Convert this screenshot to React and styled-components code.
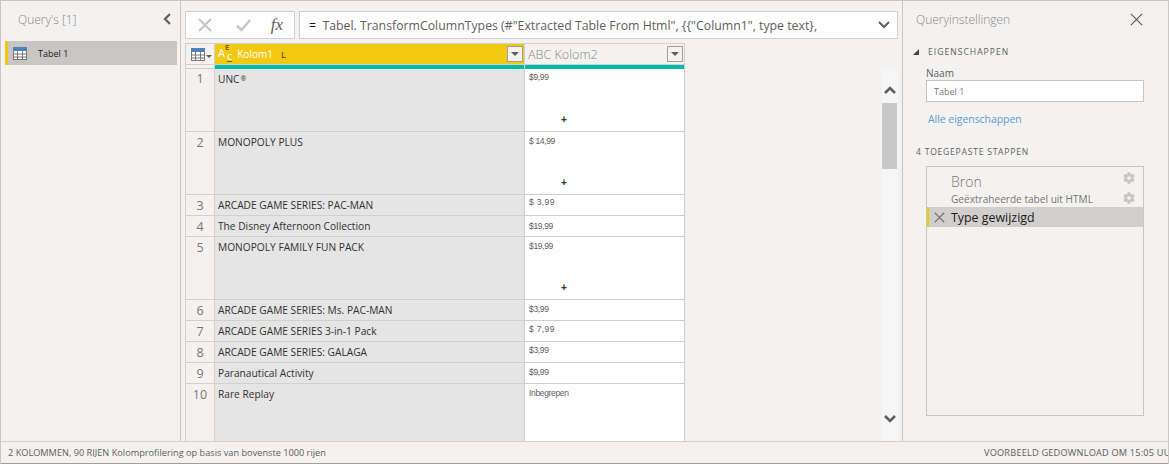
import styled, { createGlobalStyle } from 'styled-components';
import { FaCog } from 'react-icons/fa';

const GlobalStyle = createGlobalStyle`
  html, body {
    margin: 0;
    padding: 0;
    height: 100%;
    overflow: hidden;
    background: #f3f2f1;
  }
  * { box-sizing: border-box; }
`;

const Page = styled.div`
  width: 1169px;
  height: 464px;
  display: grid;
  grid-template-columns: 180px 722px 1fr;
  grid-template-rows: 440px 23px;
  border-top: 1px solid #c8c6c4;
  border-left: 1px solid #c8c6c4;
  border-right: 1px solid #c8c6c4;
  font-family: 'Open Sans', 'Liberation Sans', sans-serif;
  color: #3b3a39;
  overflow: hidden;
`;

const LeftPane = styled.aside`
  border-right: 1px solid #c8c6c4;
  padding: 0 3px 0 4px;
`;

const PaneHeader = styled.div`
  height: 40px;
  padding: 0 6px 4px 13px;
  display: flex;
  align-items: center;
  justify-content: space-between;
  font-size: 12px;
  font-weight: 300;
  color: #8a8886;
`;

const QueryItem = styled.div`
  height: 24px;
  display: flex;
  align-items: center;
  gap: 11px;
  padding-left: 5px;
  background: #c8c6c4;
  border-left: 3px solid #f2c811;
  font-size: 9px;
  color: #1b1a19;
`;

const Main = styled.main`
  padding: 10px 4px 0 4px;
  display: flex;
  flex-direction: column;
  border-right: 1px solid #c8c6c4;
  min-height: 0;
`;

const FormulaRow = styled.div`
  display: flex;
  gap: 4px;
  height: 28px;
  flex: none;
  margin-bottom: 4px;
`;

const FormulaButtons = styled.div`
  width: 110px;
  display: flex;
  align-items: center;
  justify-content: space-between;
  padding: 0 11px 0 12px;
  background: #fff;
  border: 1px solid #d2d0ce;
`;

const CheckSlot = styled.span`
  display: flex;
  margin-left: 5px;
`;

const FxLabel = styled.span`
  font-family: 'Liberation Serif', serif;
  font-style: italic;
  font-size: 17px;
  color: #605e5c;
`;

const FormulaInput = styled.div`
  flex: 1;
  display: flex;
  align-items: center;
  justify-content: space-between;
  padding: 0 7px 0 9px;
  background: #fff;
  border: 1px solid #d2d0ce;
  font-size: 12.3px;
  color: #605e5c;
  white-space: pre;
`;

const Equals = styled.span`
  color: #1b1a19;
`;

const Workspace = styled.div`
  flex: 1;
  display: flex;
  justify-content: space-between;
  min-height: 0;
`;

const Grid = styled.div`
  width: 500px;
  display: flex;
  flex-direction: column;
  border-left: 1px solid #d2d0ce;
  overflow: hidden;
`;

const HeaderRow = styled.div`
  display: flex;
  height: 22px;
  flex: none;
  border-top: 1px solid #d2d0ce;
  border-bottom: 1px solid #d2d0ce;
`;

const Corner = styled.div`
  width: 29px;
  flex: none;
  display: flex;
  align-items: center;
  padding-left: 5px;
  gap: 1px;
  border-right: 1px solid #d2d0ce;
  background: #f3f2f1;
`;

const ColumnHead = styled.div`
  width: ${p => p.$width}px;
  flex: none;
  display: flex;
  align-items: center;
  justify-content: space-between;
  padding: 0 1px 0 3px;
  background: ${p => (p.$active ? '#f2c811' : '#f3f2f1')};
  color: ${p => (p.$active ? '#fff' : '#8a8886')};
  font-size: ${p => (p.$active ? 10 : 12.6)}px;
  font-weight: ${p => (p.$active ? 400 : 300)};
  border-right: 1px solid #d2d0ce;
`;

const HeadLabel = styled.span`
  display: flex;
  align-items: center;
  white-space: pre;
`;

const TypeGlyph = styled.span`
  display: inline-flex;
  align-items: flex-end;
  height: 18px;
  padding-bottom: 3px;
  font-size: 11px;
  margin-right: 5px;
`;

const Raised = styled.span`
  font-size: 7px;
  font-weight: 700;
  color: #6b5d12;
  align-self: flex-start;
  line-height: 6px;
  width: 0;
`;

const Underlined = styled.span`
  text-decoration: underline;
  text-decoration-color: #6b5d12;
  margin-left: 2px;
  line-height: 9px;
`;

const Cursor = styled.span`
  margin-left: 8px;
  font-size: 9px;
  font-weight: 600;
  color: #6b5d12;
`;

const FilterButton = styled.span`
  width: 16px;
  height: 16px;
  display: flex;
  align-items: center;
  justify-content: center;
  background: #f3f2f1;
  border: 1px solid #a19f9d;
  &::after {
    content: '';
    border-left: 4px solid transparent;
    border-right: 4px solid transparent;
    border-top: 4px solid #605e5c;
  }
`;

const QualityRow = styled.div`
  display: flex;
  height: 4px;
  flex: none;
`;

const QualityGap = styled.div`
  width: 29px;
  flex: none;
  border-right: 1px solid #d2d0ce;
  border-bottom: 1px solid #d2d0ce;
`;

const QualityBar = styled.div`
  width: ${p => p.$width}px;
  flex: none;
  background: #01b8aa;
  border-right: 1px solid #d2d0ce;
`;

const Row = styled.div`
  display: flex;
  height: ${p => p.$height}px;
  flex: none;
  border-bottom: 1px solid #d2d0ce;
`;

const RowNumber = styled.div`
  width: 29px;
  flex: none;
  text-align: center;
  padding-top: ${p => (p.$first ? 1 : 2)}px;
  font-size: 12.5px;
  color: #797775;
  border-right: 1px solid #d2d0ce;
  background: #f3f2f1;
`;

const TitleCell = styled.div`
  width: 310px;
  flex: none;
  padding: ${p => (p.$first ? 2 : 3)}px 0 0 3px;
  background: #e5e5e5;
  font-size: 10.2px;
  line-height: 15px;
  color: #323130;
  border-right: 1px solid #d2d0ce;
`;

const Registered = styled.span`
  font-size: 7px;
  vertical-align: 2px;
  margin-left: 1px;
`;

const PriceCell = styled.div`
  width: 160px;
  flex: none;
  display: flex;
  flex-direction: column;
  padding: ${p => p.$top}px 0 6px 4px;
  background: #fff;
  font-family: 'Liberation Sans', sans-serif;
  font-size: 8.5px;
  line-height: 10px;
  letter-spacing: ${p => (p.$wide ? '0.35px' : '-0.35px')};
  color: #605e5c;
  border-right: 1px solid #d2d0ce;
`;

const PlusMark = styled.span`
  margin-top: auto;
  padding-left: 32px;
  font-size: 10px;
  font-weight: 700;
  color: #17401f;
`;

const Scrollbar = styled.div`
  width: 16px;
  margin-top: 26px;
  display: flex;
  flex-direction: column;
  align-items: center;
  background: #f6f6f6;
`;

const ScrollArrow = styled.div`
  height: 34px;
  width: 100%;
  display: flex;
  justify-content: center;
  align-items: ${p => (p.$down ? 'flex-start' : 'flex-end')};
  padding-bottom: ${p => (p.$down ? 0 : 9)}px;
  padding-top: ${p => (p.$down ? 8 : 0)}px;
`;

const ScrollThumb = styled.div`
  width: 15px;
  height: 66px;
  margin-left: -1px;
  background: #c8c8c8;
`;

const ScrollSpacer = styled.div`
  flex: 1;
`;

const RightPane = styled.aside`
  padding: 0 24px 0 13px;
`;

const SettingsHeader = styled.div`
  height: 40px;
  padding-bottom: 4px;
  display: flex;
  align-items: center;
  justify-content: space-between;
  font-size: 12px;
  font-weight: 300;
  color: #8a8886;
  margin-right: 1px;
`;

const SectionTitle = styled.div`
  display: flex;
  align-items: center;
  gap: 9px;
  height: 22px;
  font-size: 8.6px;
  letter-spacing: 1px;
  color: #605e5c;
  margin-left: -3px;
`;

const CollapseTriangle = styled.span`
  width: 0;
  height: 0;
  border-left: 6px solid transparent;
  border-bottom: 6px solid #444;
`;

const Properties = styled.div`
  padding-left: 10px;
`;

const FieldLabel = styled.div`
  margin-top: 3px;
  font-size: 10px;
  line-height: 14px;
  color: #605e5c;
`;

const NameInput = styled.div`
  height: 22px;
  display: flex;
  align-items: center;
  padding-left: 7px;
  background: #fff;
  border: 1px solid #c8c6c4;
  font-size: 9px;
  color: #797775;
`;

const AllLink = styled.a`
  display: block;
  margin: 9px 0 0 2px;
  font-size: 10.4px;
  line-height: 16px;
  color: #5b9bd5;
`;

const StepsTitle = styled.div`
  margin-top: 18px;
  height: 14px;
  font-size: 8.6px;
  line-height: 14px;
  letter-spacing: 0.75px;
  color: #605e5c;
`;

const StepList = styled.div`
  margin: 7px 0 0 10px;
  height: 250px;
  border: 1px solid #c8c6c4;
  padding-top: 6px;
`;

const Step = styled.div`
  display: flex;
  align-items: center;
  height: ${p => (p.$selected ? 20 : 17)}px;
  padding-right: 8px;
  padding-left: ${p => (p.$selected ? '5px' : '24px')};
  font-size: ${p => p.$size}px;
  font-weight: ${p => (p.$size > 13 ? 300 : 400)};
  color: ${p => (p.$selected ? '#1b1a19' : '#797775')};
  background: ${p => (p.$selected ? '#d0cfcd' : 'transparent')};
  border-left: ${p => (p.$selected ? '2px solid #f2c811' : 'none')};
`;

const StepName = styled.span`
  flex: 1;
  white-space: nowrap;
  margin-left: ${p => (p.$afterIcon ? 6 : 0)}px;
`;

const StepGear = styled(FaCog)`
  margin-bottom: ${p => p.$lift}px;
  color: #c8c6c4;
`;

const StatusBar = styled.footer`
  grid-column: 1 / -1;
  display: flex;
  align-items: center;
  justify-content: space-between;
  padding-left: 7px;
  border-top: 1px solid #d2d0ce;
  border-bottom: 1px solid #a19f9d;
  font-size: 9.2px;
  color: #605e5c;
  white-space: nowrap;
`;

const StatusRight = styled.span`
  letter-spacing: 0.2px;
  width: 184px;
  overflow: hidden;
`;

const Cross = ({ size = 14, color = '#c8c6c4', width = 2 }) => (
  <svg width={size} height={size} viewBox="0 0 14 14">
    <path d="M1 1 L13 13 M13 1 L1 13" stroke={color} strokeWidth={width} fill="none" />
  </svg>
);

const Check = () => (
  <svg width="15" height="14" viewBox="0 0 15 14">
    <path d="M1 8 L5.5 12 L14 2" stroke="#c8c6c4" strokeWidth="2.4" fill="none" />
  </svg>
);

const Chevron = ({ up, stroke = 2.4 }) => (
  <svg width="12" height="8" viewBox="0 0 12 8">
    <path d={up ? 'M1 7 L6 2 L11 7' : 'M1 1 L6 6 L11 1'} stroke="#605e5c" strokeWidth={stroke} fill="none" />
  </svg>
);

const ChevronLeft = () => (
  <svg width="8" height="12" viewBox="0 0 8 12">
    <path d="M7 1 L2 6 L7 11" stroke="#605e5c" strokeWidth="2.2" fill="none" />
  </svg>
);

const TableIcon = () => (
  <svg width="14" height="13" viewBox="0 0 14 13">
    <rect x="0.5" y="0.5" width="13" height="12" fill="#fff" stroke="#797775" />
    <rect x="0" y="0" width="14" height="4" fill="#4f81bd" />
    <path d="M0 7 H14 M0 10 H14 M4.5 4 V13 M9.5 4 V13" stroke="#797775" strokeWidth="1" />
  </svg>
);

const SmallCaret = styled.span`
  border-left: 3px solid transparent;
  border-right: 3px solid transparent;
  border-top: 3px solid #605e5c;
  margin-top: 5px;
`;

const rows = [
  { n: 1, title: 'UNC', mark: true, price: '$9,99', height: 63, top: 3, plus: true },
  { n: 2, title: 'MONOPOLY PLUS', price: '$ 14,99', height: 63, top: 4, plus: true },
  { n: 3, title: 'ARCADE GAME SERIES: PAC-MAN', price: '$ 3,99', height: 21, top: 2, wide: true },
  { n: 4, title: 'The Disney Afternoon Collection', price: '$19,99', height: 21, top: 5 },
  { n: 5, title: 'MONOPOLY FAMILY FUN PACK', price: '$19,99', height: 63, top: 4, plus: true },
  { n: 6, title: 'ARCADE GAME SERIES: Ms. PAC-MAN', price: '$3,99', height: 21, top: 4 },
  { n: 7, title: 'ARCADE GAME SERIES 3-in-1 Pack', price: '$ 7,99', height: 21, top: 3, wide: true },
  { n: 8, title: 'ARCADE GAME SERIES: GALAGA', price: '$3,99', height: 21, top: 3 },
  { n: 9, title: 'Paranautical Activity', price: '$9,99', height: 21, top: 4 },
  { n: 10, title: 'Rare Replay', price: 'Inbegrepen', height: 63, top: 4 },
];

export default function App() {
  return (
    <>
      <GlobalStyle />
      <Page>
        <LeftPane>
          <PaneHeader>
            <span>Query's [1]</span>
            <ChevronLeft />
          </PaneHeader>
          <QueryItem>
            <TableIcon />
            <span>Tabel 1</span>
          </QueryItem>
        </LeftPane>

        <Main>
          <FormulaRow>
            <FormulaButtons>
              <Cross />
              <CheckSlot>
                <Check />
              </CheckSlot>
              <FxLabel>fx</FxLabel>
            </FormulaButtons>
            <FormulaInput>
              <span>
                <Equals>=</Equals>
                {'  Tabel. TransformColumnTypes (#"Extracted Table From Html", {{"Column1", type text},'}
              </span>
              <Chevron stroke={2} />
            </FormulaInput>
          </FormulaRow>

          <Workspace>
            <Grid>
              <HeaderRow>
                <Corner>
                  <TableIcon />
                  <SmallCaret />
                </Corner>
                <ColumnHead $width={310} $active>
                  <HeadLabel>
                    <TypeGlyph>
                      A<Raised>E</Raised>
                      <Underlined>c</Underlined>
                    </TypeGlyph>
                    Kolom1
                    <Cursor>L</Cursor>
                  </HeadLabel>
                  <FilterButton />
                </ColumnHead>
                <ColumnHead $width={160}>
                  <HeadLabel>ABC Kolom2</HeadLabel>
                  <FilterButton />
                </ColumnHead>
              </HeaderRow>
              <QualityRow>
                <QualityGap />
                <QualityBar $width={310} />
                <QualityBar $width={160} />
              </QualityRow>
              {rows.map(r => (
                <Row key={r.n} $height={r.height}>
                  <RowNumber $first={r.n === 1}>{r.n}</RowNumber>
                  <TitleCell $first={r.n === 1}>
                    {r.title}
                    {r.mark && <Registered>®</Registered>}
                  </TitleCell>
                  <PriceCell $top={r.top} $wide={r.wide}>
                    <span>{r.price}</span>
                    {r.plus && <PlusMark>+</PlusMark>}
                  </PriceCell>
                </Row>
              ))}
            </Grid>
            <Scrollbar>
              <ScrollArrow>
                <Chevron up stroke={2.6} />
              </ScrollArrow>
              <ScrollThumb />
              <ScrollSpacer />
              <ScrollArrow $down>
                <Chevron stroke={2.6} />
              </ScrollArrow>
            </Scrollbar>
          </Workspace>
        </Main>

        <RightPane>
          <SettingsHeader>
            <span>Queryinstellingen</span>
            <Cross size={13} color="#605e5c" width={1.3} />
          </SettingsHeader>
          <SectionTitle>
            <CollapseTriangle />
            <span>EIGENSCHAPPEN</span>
          </SectionTitle>
          <Properties>
            <FieldLabel>Naam</FieldLabel>
            <NameInput>Tabel 1</NameInput>
            <AllLink>Alle eigenschappen</AllLink>
          </Properties>
          <StepsTitle>4 TOEGEPASTE STAPPEN</StepsTitle>
          <StepList>
            <Step $size={14}>
              <StepName>Bron</StepName>
              <StepGear size={12} $lift={8} />
            </Step>
            <Step $size={10.1}>
              <StepName>Geëxtraheerde tabel uit HTML</StepName>
              <StepGear size={12} $lift={2} />
            </Step>
            <Step $selected $size={12.4}>
              <Cross size={11} color="#797775" width={1.5} />
              <StepName $afterIcon>Type gewijzigd</StepName>
            </Step>
          </StepList>
        </RightPane>

        <StatusBar>
          <span>2 KOLOMMEN, 90 RIJEN  Kolomprofilering op basis van bovenste 1000 rijen</span>
          <StatusRight>VOORBEELD GEDOWNLOAD OM 15:05 UUR</StatusRight>
        </StatusBar>
      </Page>
    </>
  );
}
